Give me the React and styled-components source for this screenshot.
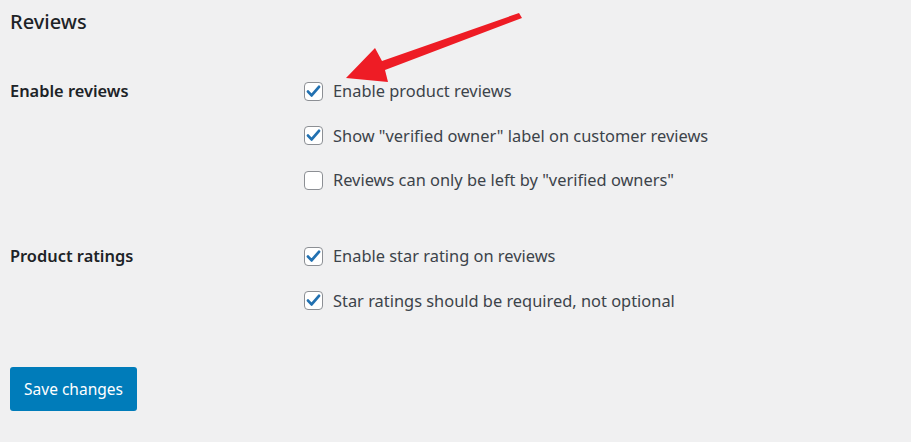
import React from "react";
import styled, { createGlobalStyle } from "styled-components";

const GlobalStyle = createGlobalStyle`
  html, body {
    margin: 0;
    padding: 0;
    background: #f0f0f1;
  }
  body {
    font-family: "Noto Sans", "Open Sans", sans-serif;
    color: #3c434a;
  }
`;

const Page = styled.div`
  position: relative;
  width: 911px;
  height: 442px;
  padding: 0 10px;
  box-sizing: border-box;
  overflow: hidden;
`;

const Title = styled.h2`
  margin: 0;
  padding-top: 8px;
  font-size: 20px;
  font-weight: 500;
  line-height: 28px;
  color: #1d2327;
`;

const Section = styled.div`
  display: grid;
  grid-template-columns: 294px 1fr;
  margin-top: ${(p) => p.top}px;
`;

const Label = styled.div`
  font-size: 16.4px;
  font-weight: 600;
  line-height: 24px;
  color: #1d2327;
`;

const Options = styled.div`
  display: flex;
  flex-direction: column;
  gap: 20.5px;
`;

const Option = styled.label`
  display: flex;
  align-items: center;
  gap: 10px;
  font-size: 16.4px;
  line-height: 24px;
  color: #3c434a;
`;

const Box = styled.span`
  display: flex;
  align-items: center;
  justify-content: center;
  width: 19px;
  height: 19px;
  box-sizing: border-box;
  border: 1px solid #8c8f94;
  border-radius: 4px;
  background: #fff;
`;

const Button = styled.button`
  margin-top: 54px;
  width: 127px;
  height: 44px;
  border: none;
  border-radius: 3px;
  background: #007cba;
  color: #fff;
  font-family: "Noto Sans", "Open Sans", sans-serif;
  font-size: 15.5px;
`;

const Arrow = styled.svg`
  position: absolute;
  left: 0;
  top: 0;
`;

const Check = ({ checked, children }) => (
  <Option>
    <Box>
      {checked && (
        <svg width="17" height="17" viewBox="0 0 17 17">
          <path
            d="M3 8.6 L6.6 12.4 L14 3.8"
            fill="none"
            stroke="#2271b1"
            strokeWidth="2.8"
            strokeLinecap="round"
            strokeLinejoin="round"
          />
        </svg>
      )}
    </Box>
    {children}
  </Option>
);

export default function App() {
  return (
    <>
      <GlobalStyle />
      <Page>
        <Title>Reviews</Title>
        <Section top={43}>
          <Label>Enable reviews</Label>
          <Options>
            <Check checked>Enable product reviews</Check>
            <Check checked>Show "verified owner" label on customer reviews</Check>
            <Check>Reviews can only be left by "verified owners"</Check>
          </Options>
        </Section>
        <Section top={52}>
          <Label>Product ratings</Label>
          <Options>
            <Check checked>Enable star rating on reviews</Check>
            <Check checked>Star ratings should be required, not optional</Check>
          </Options>
        </Section>
        <Button>Save changes</Button>
        <Arrow width="911" height="442">
          <polygon
            points="519,13 382,61 375,48 346,78 388,82 385,70 522,18"
            fill="#ee1c25"
          />
        </Arrow>
      </Page>
    </>
  );
}
